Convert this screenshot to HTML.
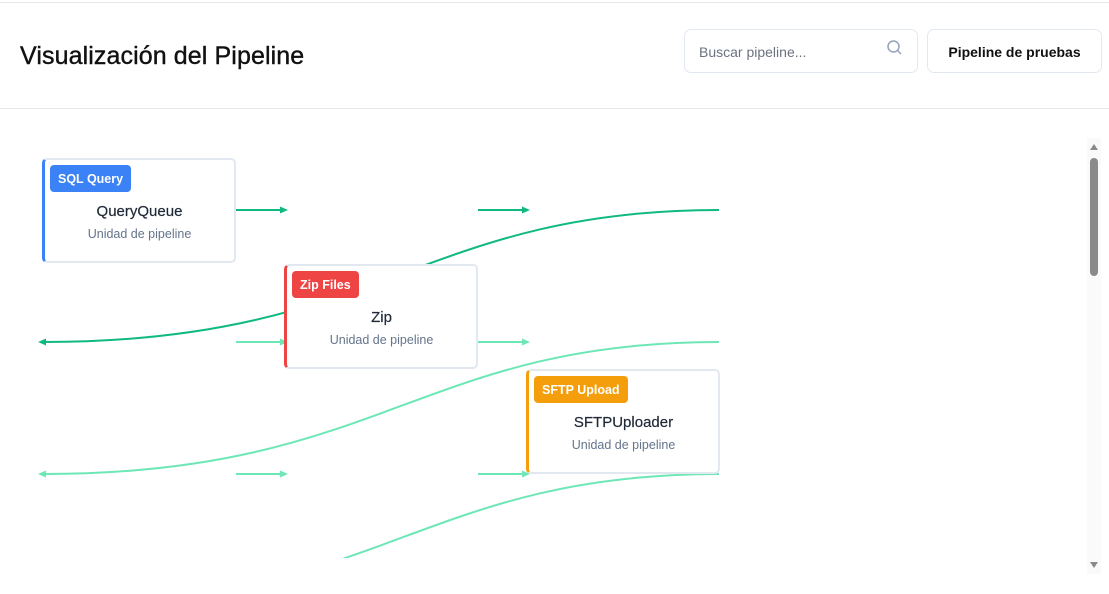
<!DOCTYPE html>
<html><head><meta charset="utf-8"><style>
*{box-sizing:border-box;margin:0;padding:0}
body{width:1109px;height:594px;background:#fff;font-family:"Liberation Sans",sans-serif;position:relative;overflow:hidden}
.topline{position:absolute;left:0;top:2px;width:1109px;height:1px;background:#e5e7eb}
.hline{position:absolute;left:0;top:108px;width:1109px;height:1px;background:#e5e7eb}
h1{position:absolute;left:20px;top:42px;font-size:25px;font-weight:normal;color:#111;letter-spacing:0.1px;-webkit-text-stroke:0.4px #111}
.search{position:absolute;left:684px;top:29px;width:234px;height:44px;border:1px solid #e2e8f0;border-radius:7px;color:#6b7280;font-size:14px;padding:14px 0 0 14px}
.btn{position:absolute;left:927px;top:29px;width:175px;height:44px;border:1px solid #e2e8f0;border-radius:7px;font-size:14px;font-weight:bold;color:#111;text-align:center;padding-top:14px}
.card{position:absolute;width:194px;height:105px;background:#fff;border:2px solid #e2e8f0;border-radius:5px;text-align:center}
.tag{position:absolute;left:5px;top:5px;height:27px;border-radius:4px;color:#fff;font-size:12.5px;font-weight:bold;padding:7px 8px 0}
.name{position:absolute;left:0;right:0;top:43px;font-size:15px;color:#1f2937;-webkit-text-stroke:0.2px #1f2937}
.sub{position:absolute;left:0;right:0;top:67px;font-size:12.5px;color:#64748b}
.sb{position:absolute;left:1087px;top:138px;width:14px;height:436px;background:#fafafa}
.thumb{position:absolute;left:1090px;top:158px;width:8px;height:118px;background:#8a8a8a;border-radius:4px}
</style></head><body>
<div class="topline"></div>
<h1>Visualización del Pipeline</h1>
<div class="search">Buscar pipeline...
<svg style="position:absolute;right:13px;top:9px" width="18" height="18" viewBox="0 0 18 18"><circle cx="7.5" cy="7.5" r="5.5" fill="none" stroke="#94a3b8" stroke-width="1.5"/><line x1="11.5" y1="11.5" x2="15" y2="15" stroke="#94a3b8" stroke-width="1.5"/></svg></div>
<div class="btn">Pipeline de pruebas</div>
<div class="hline"></div>
<svg style="position:absolute;left:0;top:0" width="1109" height="594">
<defs><clipPath id="c"><rect x="0" y="110" width="1080" height="448"/></clipPath></defs>
<g clip-path="url(#c)" fill="none" stroke-width="2">
<g stroke="#10b981">
<line x1="236" y1="210" x2="282" y2="210"/><polygon points="288,210 280,206.5 280,213.5" fill="#10b981" stroke="none"/>
<line x1="478" y1="210" x2="524" y2="210"/><polygon points="530,210 522,206.5 522,213.5" fill="#10b981" stroke="none"/>
<path d="M719 210 C420 210 380 342 44 342"/><polygon points="38,342 46,338.5 46,345.5" fill="#10b981" stroke="none"/>
</g>
<g stroke="#6ee7b7">
<line x1="236" y1="342" x2="282" y2="342"/><polygon points="288,342 280,338.5 280,345.5" fill="#6ee7b7" stroke="none"/>
<line x1="478" y1="342" x2="524" y2="342"/><polygon points="530,342 522,338.5 522,345.5" fill="#6ee7b7" stroke="none"/>
<path d="M719 342 C420 342 380 474 44 474"/><polygon points="38,474 46,470.5 46,477.5" fill="#6ee7b7" stroke="none"/>
<line x1="236" y1="474" x2="282" y2="474"/><polygon points="288,474 280,470.5 280,477.5" fill="#6ee7b7" stroke="none"/>
<line x1="478" y1="474" x2="524" y2="474"/><polygon points="530,474 522,470.5 522,477.5" fill="#6ee7b7" stroke="none"/>
<path d="M719 474 C420 474 380 606 44 606"/>
</g></g></svg>
<div class="card" style="left:42px;top:158px;border-left:3px solid #3b82f6"><div class="tag" style="background:#3b82f6">SQL Query</div><div class="name">QueryQueue</div><div class="sub">Unidad de pipeline</div></div>
<div class="card" style="left:284px;top:264px;border-left:3px solid #ef4444"><div class="tag" style="background:#ef4444">Zip Files</div><div class="name">Zip</div><div class="sub">Unidad de pipeline</div></div>
<div class="card" style="left:526px;top:369px;border-left:3px solid #f59e0b"><div class="tag" style="background:#f59e0b">SFTP Upload</div><div class="name">SFTPUploader</div><div class="sub">Unidad de pipeline</div></div>
<div class="sb"></div>
<svg style="position:absolute;left:1089px;top:143px" width="10" height="8"><polygon points="5,1 9,7 1,7" fill="#8a8a8a"/></svg>
<svg style="position:absolute;left:1089px;top:561px" width="10" height="8"><polygon points="1,1 9,1 5,7" fill="#8a8a8a"/></svg>
<div class="thumb"></div>
</body></html>
